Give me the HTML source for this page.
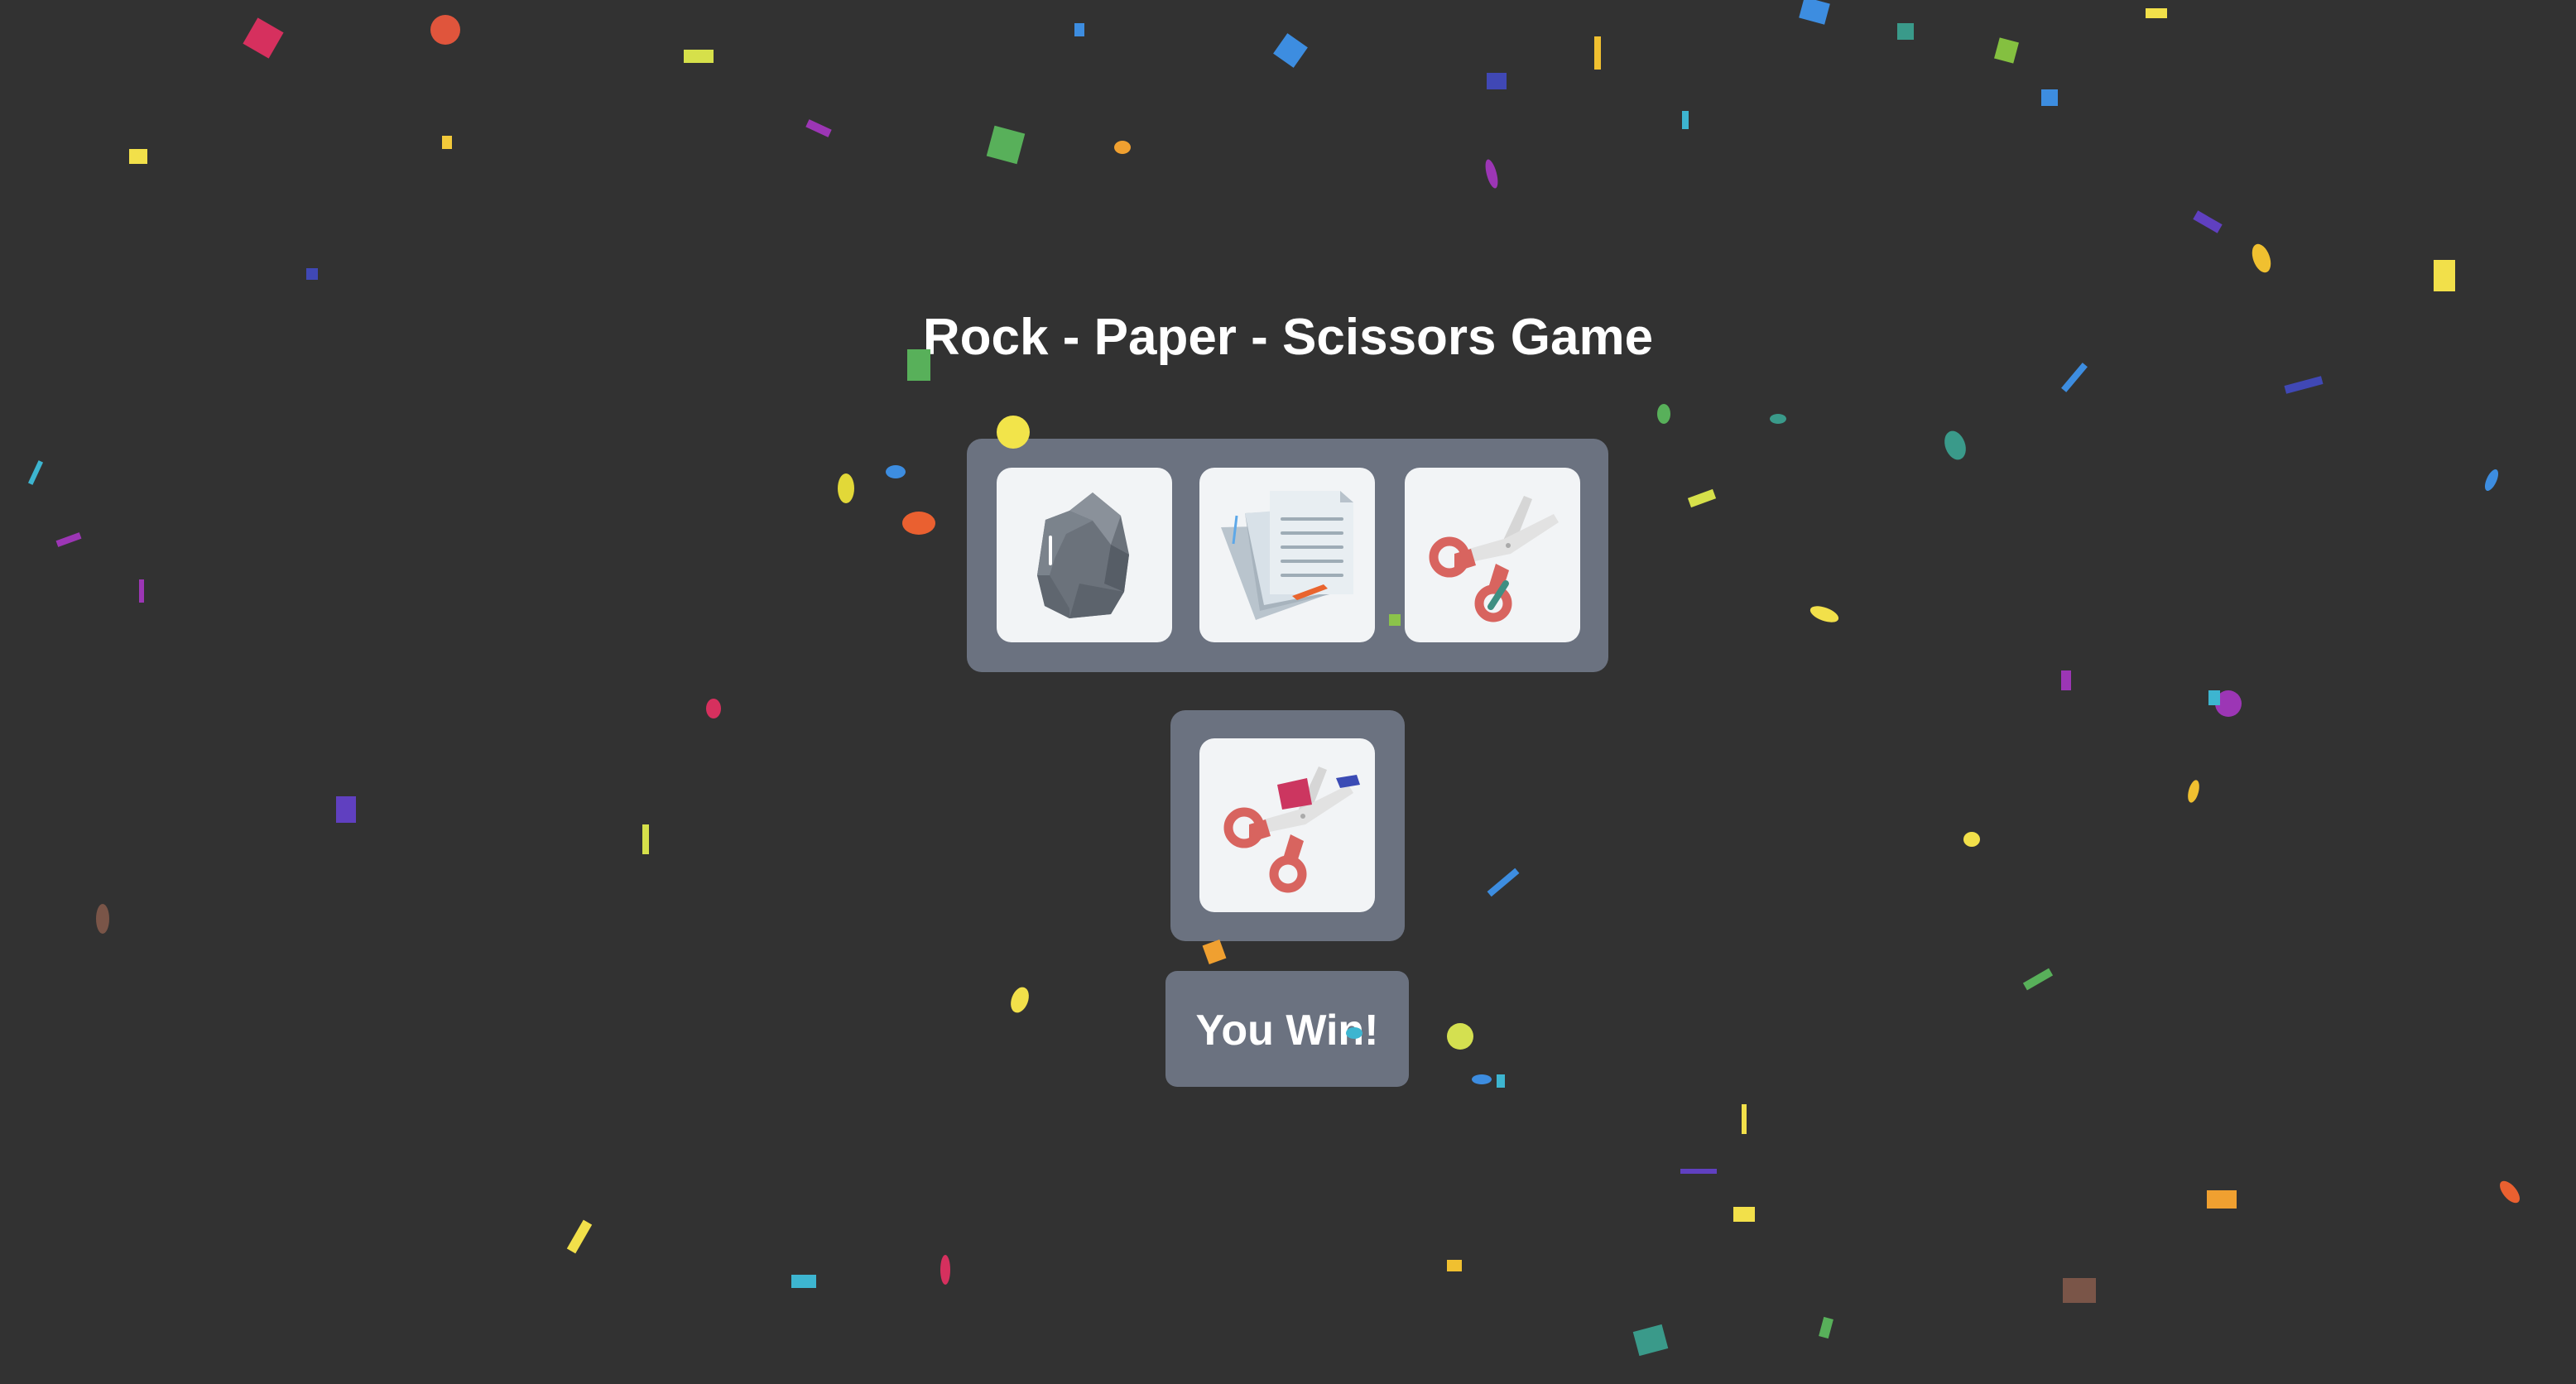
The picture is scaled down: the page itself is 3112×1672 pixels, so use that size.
<!DOCTYPE html>
<html><head><meta charset="utf-8"><style>
html,body{margin:0;padding:0;width:3112px;height:1672px;overflow:hidden;background:#323232;font-family:"Liberation Sans",sans-serif}
.abs{position:absolute}
h1{position:absolute;left:0;width:3112px;top:372px;margin:0;text-align:center;color:#fff;font-size:62px;font-weight:bold;letter-spacing:0}
.panel{position:absolute;background:#6b7280;border-radius:18px}
.card{position:absolute;background:#f2f4f6;border-radius:18px;width:212px;height:211px}
.card svg{width:212px;height:211px}
.btn{position:absolute;left:1408px;top:1173px;width:294px;height:140px;background:#6b7280;border-radius:14px;color:#fff;font-size:52px;font-weight:bold;text-align:center;line-height:144px}
.c{position:absolute}
</style></head><body>
<h1>Rock - Paper - Scissors Game</h1>
<div class="panel" style="left:1168px;top:530px;width:775px;height:282px"></div>
<div class="card" style="left:1204px;top:565px">
<svg viewBox="0 0 212 211">
<polygon points="116,30 150,58 160,105 154,150 138,177 88,182 58,167 49,130 59,63 88,52" fill="#6b727b"/>
<polygon points="116,30 150,58 138,93 116,64 88,52" fill="#8a919a"/>
<polygon points="59,63 88,52 116,64 84,80 70,110 64,130 49,130" fill="#7b838c"/>
<polygon points="49,130 64,130 88,170 88,182 58,167" fill="#5f666f"/>
<polygon points="138,93 160,105 154,150 130,140" fill="#565d66"/>
<polygon points="88,182 138,177 154,150 100,140" fill="#5c636c"/>
<rect x="63" y="82" width="4" height="36" rx="2" fill="#fff"/>
</svg></div>
<div class="card" style="left:1449px;top:565px">
<svg viewBox="0 0 212 211">
<polygon points="26,72 68,184 155,153 120,70" fill="#b9c4cd"/>
<polygon points="55,55 73,173 170,150 150,50" fill="#a7b3bd"/>
<polygon points="55,55 78,166 160,150 150,48" fill="#d8e1e8"/>
<polygon points="85,28 170,28 186,42 186,153 85,153" fill="#e8eef2"/>
<polygon points="170,28 186,42 170,42" fill="#b8c2cb"/>
<g stroke="#9eacb6" stroke-width="4" stroke-linecap="round">
<line x1="100" y1="62" x2="172" y2="62"/><line x1="100" y1="79" x2="172" y2="79"/><line x1="100" y1="96" x2="172" y2="96"/><line x1="100" y1="113" x2="172" y2="113"/><line x1="100" y1="130" x2="172" y2="130"/></g>
<line x1="45" y1="58" x2="41" y2="92" stroke="#5ea8e8" stroke-width="3"/>
<polygon points="112,155 150,141 155,146 118,160" fill="#e9642e"/>
</svg></div>
<div class="card" style="left:1697px;top:565px">
<svg viewBox="0 0 212 211">
<polygon points="144,34 154,38 130,100 116,94" fill="#d6d6d6"/>
<polygon points="180,56 186,66 128,104 80,114 78,98 120,86" fill="#e2e2e2"/>
<circle cx="125" cy="94" r="3" fill="#aaa"/>
<polygon points="80,98 86,118 60,126 60,104" fill="#d8645f"/>
<circle cx="54" cy="108" r="19" fill="none" stroke="#d8645f" stroke-width="11"/>
<polygon points="110,116 126,124 119,146 102,142" fill="#d8645f"/>
<circle cx="107" cy="164" r="17" fill="none" stroke="#d8645f" stroke-width="11"/>
<line x1="104" y1="168" x2="122" y2="140" stroke="#3f8f82" stroke-width="8" stroke-linecap="round"/>
</svg></div>
<div class="panel" style="left:1414px;top:858px;width:283px;height:279px"></div>
<div class="card" style="left:1449px;top:892px;height:210px">
<svg viewBox="0 0 212 211">
<polygon points="144,34 154,38 130,100 116,94" fill="#d6d6d6"/>
<polygon points="180,56 186,66 128,104 80,114 78,98 120,86" fill="#e2e2e2"/>
<circle cx="125" cy="94" r="3" fill="#aaa"/>
<polygon points="80,98 86,118 60,126 60,104" fill="#d8645f"/>
<circle cx="54" cy="108" r="19" fill="none" stroke="#d8645f" stroke-width="11"/>
<polygon points="110,116 126,124 119,146 102,142" fill="#d8645f"/>
<circle cx="107" cy="164" r="17" fill="none" stroke="#d8645f" stroke-width="11"/>
<polygon points="94,56 130,48 136,80 100,86" fill="#cc3660"/>
<polygon points="165,48 190,44 194,56 170,60" fill="#3b4bb5"/>
</svg></div>
<div class="btn">You Win!</div>
<svg class="abs" style="left:0;top:0" width="3112" height="1672">
<g>
<circle cx="538" cy="36" r="18" fill="#e0553c"/>
<rect x="300" y="28" width="36" height="36" fill="#d6305e" transform="rotate(30 318 46)"/>
<rect x="826" y="60" width="36" height="16" fill="#d6e04a"/>
<rect x="156" y="180" width="22" height="18" fill="#f2e04a"/>
<rect x="534" y="164" width="12" height="16" fill="#f2c93a"/>
<rect x="1196" y="156" width="38" height="38" fill="#58b05a" transform="rotate(15 1215 175)"/>
<ellipse cx="1356" cy="178" rx="10" ry="8" fill="#f0a030"/>
<rect x="1544" y="46" width="30" height="30" fill="#3d8de0" transform="rotate(35 1559 61)"/>
<rect x="1796" y="88" width="24" height="20" fill="#4048b5"/>
<rect x="1926" y="44" width="8" height="40" fill="#f0c030"/>
<rect x="2176" y="0" width="32" height="26" fill="#3d8de0" transform="rotate(15 2192 13)"/>
<rect x="2292" y="28" width="20" height="20" fill="#3a9a8a"/>
<rect x="2412" y="48" width="24" height="26" fill="#84c040" transform="rotate(15 2424 61)"/>
<rect x="2466" y="108" width="20" height="20" fill="#3d8de0"/>
<rect x="2940" y="314" width="26" height="38" fill="#f2e04a"/>
<ellipse cx="2732" cy="312" rx="10" ry="18" fill="#f0c030" transform="rotate(-20 2732 312)"/>
<rect x="1096" y="422" width="28" height="38" fill="#58b05a"/>
<circle cx="1224" cy="522" r="20" fill="#f2e44a"/>
<ellipse cx="1022" cy="590" rx="10" ry="18" fill="#e2d838"/>
<ellipse cx="1082" cy="570" rx="12" ry="8" fill="#3d8de0"/>
<ellipse cx="1110" cy="632" rx="20" ry="14" fill="#ea6030"/>
<ellipse cx="2010" cy="500" rx="8" ry="12" fill="#58b05a"/>
<ellipse cx="2148" cy="506" rx="10" ry="6" fill="#3a9a8a"/>
<ellipse cx="2362" cy="538" rx="12" ry="18" fill="#3a9a8a" transform="rotate(-20 2362 538)"/>
<rect x="2040" y="596" width="32" height="12" fill="#d6e04a" transform="rotate(-20 2056 602)"/>
<ellipse cx="2204" cy="742" rx="18" ry="8" fill="#f2e04a" transform="rotate(20 2204 742)"/>
<rect x="1678" y="742" width="14" height="14" fill="#8bc34a"/>
<circle cx="2692" cy="850" r="16" fill="#9c36b5"/>
<rect x="2668" y="834" width="14" height="18" fill="#3db5d0"/>
<ellipse cx="862" cy="856" rx="9" ry="12" fill="#d6305e"/>
<rect x="406" y="962" width="24" height="32" fill="#6040c0"/>
<rect x="776" y="996" width="8" height="36" fill="#d6e04a"/>
<ellipse cx="124" cy="1110" rx="8" ry="18" fill="#7a5548"/>
<ellipse cx="2382" cy="1014" rx="10" ry="9" fill="#f2e04a"/>
<ellipse cx="2650" cy="956" rx="6" ry="14" fill="#f0c030" transform="rotate(15 2650 956)"/>
<rect x="1456" y="1138" width="22" height="24" fill="#f0a030" transform="rotate(-20 1467 1150)"/>
<ellipse cx="1232" cy="1208" rx="10" ry="16" fill="#f2e04a" transform="rotate(20 1232 1208)"/>
<circle cx="1764" cy="1252" r="16" fill="#d4e050"/>
<ellipse cx="1636" cy="1248" rx="10" ry="7" fill="#3db5d0"/>
<ellipse cx="1790" cy="1304" rx="12" ry="6" fill="#3d8de0"/>
<rect x="1808" y="1298" width="10" height="16" fill="#3db5d0"/>
<rect x="2104" y="1334" width="6" height="36" fill="#f2e04a"/>
<rect x="2094" y="1458" width="26" height="18" fill="#f2e04a"/>
<rect x="1748" y="1522" width="18" height="14" fill="#f0c030"/>
<rect x="2666" y="1438" width="36" height="22" fill="#f0a030"/>
<rect x="2492" y="1544" width="40" height="30" fill="#7a5548"/>
<rect x="1976" y="1604" width="36" height="30" fill="#3a9a8a" transform="rotate(-15 1994 1619)"/>
<rect x="2200" y="1592" width="12" height="24" fill="#58b05a" transform="rotate(15 2206 1604)"/>
<ellipse cx="3032" cy="1440" rx="8" ry="16" fill="#ea6030" transform="rotate(-40 3032 1440)"/>
<ellipse cx="1142" cy="1534" rx="6" ry="18" fill="#d6305e"/>
<rect x="956" y="1540" width="30" height="16" fill="#3db5d0"/>
<rect x="694" y="1474" width="12" height="40" fill="#f2e04a" transform="rotate(30 700 1494)"/>
<rect x="2444" y="1178" width="36" height="10" fill="#58b05a" transform="rotate(-30 2462 1183)"/>
<rect x="2490" y="810" width="12" height="24" fill="#9c36b5"/>
<rect x="370" y="324" width="14" height="14" fill="#4048b5"/>
<rect x="1298" y="28" width="12" height="16" fill="#3d8de0"/>
<ellipse cx="1802" cy="210" rx="6" ry="18" fill="#9c36b5" transform="rotate(-15 1802 210)"/>
<rect x="2032" y="134" width="8" height="22" fill="#3db5d0"/>
<rect x="2592" y="10" width="26" height="12" fill="#f2e04a"/>
<rect x="168" y="700" width="6" height="28" fill="#9c36b5"/>
<rect x="2760" y="460" width="46" height="10" fill="#4048b5" transform="rotate(-15 2783 465)"/>
<ellipse cx="3010" cy="580" rx="6" ry="14" fill="#3d8de0" transform="rotate(25 3010 580)"/>
<rect x="2650" y="262" width="34" height="12" fill="#6040c0" transform="rotate(30 2667 268)"/>
<rect x="2502" y="436" width="8" height="40" fill="#3d8de0" transform="rotate(40 2506 456)"/>
<rect x="974" y="150" width="30" height="10" fill="#9c36b5" transform="rotate(25 989 155)"/>
<rect x="40" y="556" width="6" height="30" fill="#3db5d0" transform="rotate(25 43 571)"/>
<rect x="68" y="648" width="30" height="8" fill="#9c36b5" transform="rotate(-20 83 652)"/>
<rect x="1812" y="1044" width="8" height="44" fill="#3d8de0" transform="rotate(50 1816 1066)"/>
<rect x="2030" y="1412" width="44" height="6" fill="#6040c0"/>
</g></svg>
</body></html>
